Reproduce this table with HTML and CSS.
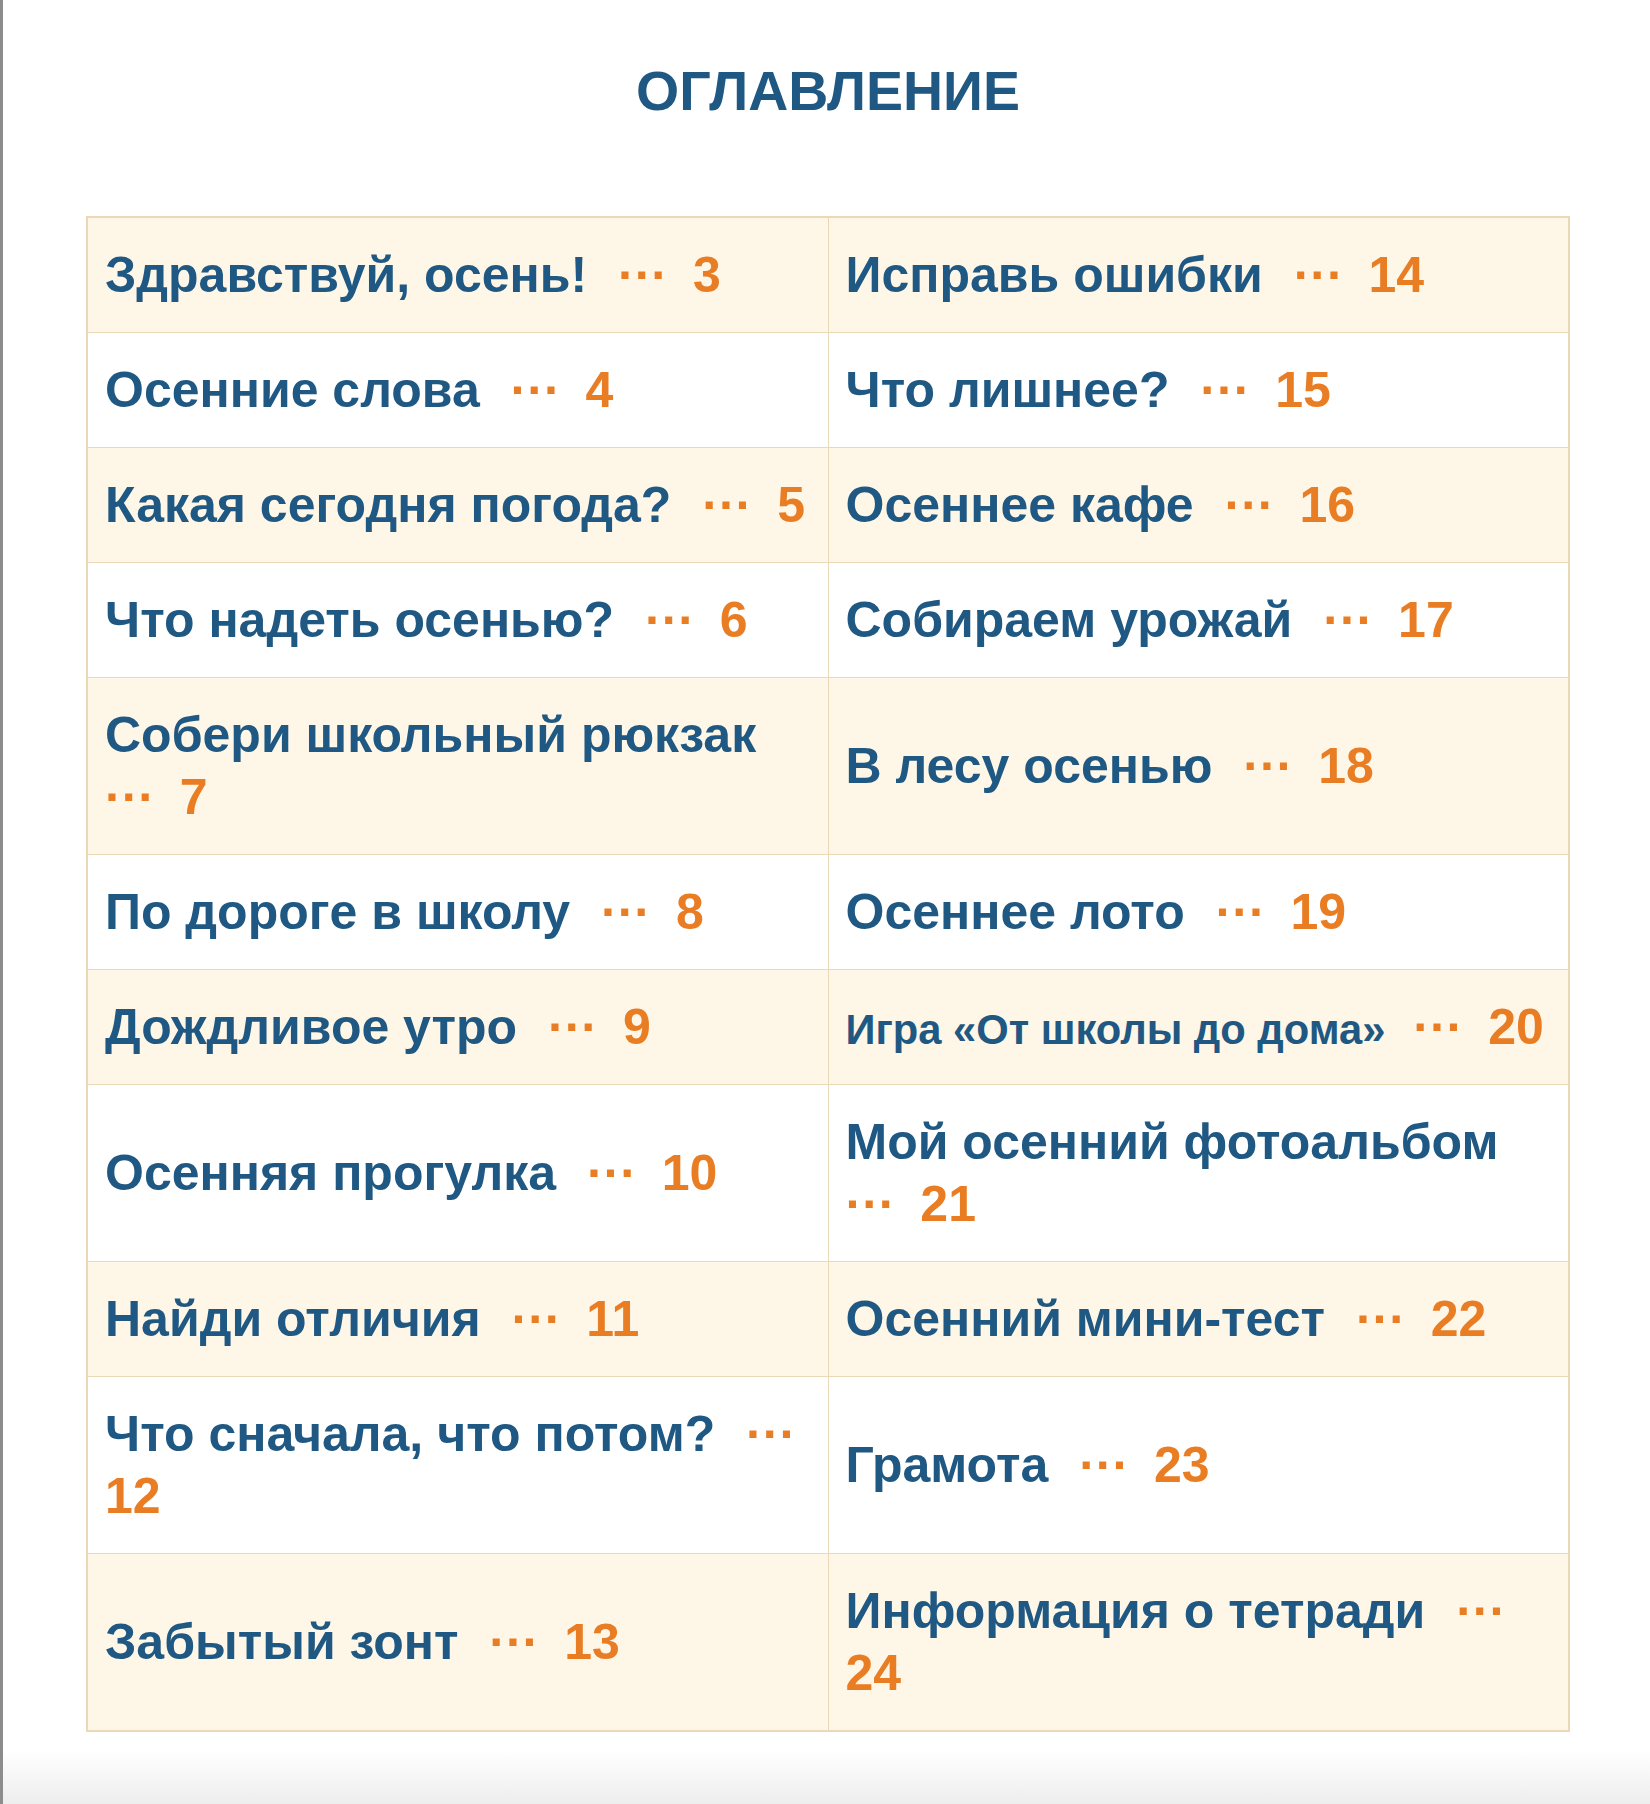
FILE: index.html
```html
<!DOCTYPE html>
<html lang="ru">
<head>
<meta charset="utf-8">
<title>Оглавление</title>
<link rel="stylesheet" href="styles.css">
</head>
<body>
<div class="page">
  <h1 class="title">ОГЛАВЛЕНИЕ</h1>
  <table class="toc">
    <tr class="odd">
      <td><span class="t">Здравствуй, осень!</span> <span class="dots">···</span> <span class="pg">3</span></td>
      <td><span class="t">Исправь ошибки</span> <span class="dots">···</span> <span class="pg">14</span></td>
    </tr>
    <tr>
      <td><span class="t">Осенние слова</span> <span class="dots">···</span> <span class="pg">4</span></td>
      <td><span class="t">Что лишнее?</span> <span class="dots">···</span> <span class="pg">15</span></td>
    </tr>
    <tr class="odd">
      <td><span class="t">Какая сегодня погода?</span> <span class="dots">···</span> <span class="pg">5</span></td>
      <td><span class="t">Осеннее кафе</span> <span class="dots">···</span> <span class="pg">16</span></td>
    </tr>
    <tr>
      <td><span class="t">Что надеть осенью?</span> <span class="dots">···</span> <span class="pg">6</span></td>
      <td><span class="t">Собираем урожай</span> <span class="dots">···</span> <span class="pg">17</span></td>
    </tr>
    <tr class="odd">
      <td><span class="t">Собери школьный рюкзак</span> <span class="dots">···</span> <span class="pg">7</span></td>
      <td><span class="t">В лесу осенью</span> <span class="dots">···</span> <span class="pg">18</span></td>
    </tr>
    <tr>
      <td><span class="t">По дороге в школу</span> <span class="dots">···</span> <span class="pg">8</span></td>
      <td><span class="t">Осеннее лото</span> <span class="dots">···</span> <span class="pg">19</span></td>
    </tr>
    <tr class="odd">
      <td><span class="t">Дождливое утро</span> <span class="dots">···</span> <span class="pg">9</span></td>
      <td><span class="t small">Игра «От школы до дома»</span> <span class="dots">···</span> <span class="pg">20</span></td>
    </tr>
    <tr>
      <td><span class="t">Осенняя прогулка</span> <span class="dots">···</span> <span class="pg">10</span></td>
      <td><span class="t">Мой осенний фотоальбом</span> <span class="dots">···</span> <span class="pg">21</span></td>
    </tr>
    <tr class="odd">
      <td><span class="t">Найди отличия</span> <span class="dots">···</span> <span class="pg">11</span></td>
      <td><span class="t">Осенний мини-тест</span> <span class="dots">···</span> <span class="pg">22</span></td>
    </tr>
    <tr>
      <td><span class="t">Что сначала, что потом?</span> <span class="dots">···</span> <span class="pg">12</span></td>
      <td><span class="t">Грамота</span> <span class="dots">···</span> <span class="pg">23</span></td>
    </tr>
    <tr class="odd">
      <td><span class="t">Забытый зонт</span> <span class="dots">···</span> <span class="pg">13</span></td>
      <td><span class="t">Информация о тетради</span> <span class="dots">···</span> <span class="pg">24</span></td>
    </tr>
  </table>
</div>
</body>
</html>
```

FILE: styles.css
```css
html, body {
  margin: 0;
  padding: 0;
  background: #ffffff;
}

body {
  font-family: "Liberation Sans", Arial, sans-serif;
}

.page {
  box-sizing: border-box;
  min-height: 1804px;
  border-left: 3px solid #8c8c8c;
  padding: 60px 80px 0 83px;
  background: linear-gradient(to bottom, #ffffff 0, #ffffff 1750px, #ededed 1804px);
}

.title {
  margin: 0 0 94px;
  text-align: center;
  font-size: 55.5px;
  line-height: 62px;
  font-weight: 700;
  color: #1f5882;
}

.toc {
  width: 1484px;
  border-collapse: collapse;
  table-layout: fixed;
  border: 2px solid #ead8b6;
}

.toc td {
  width: 50%;
  border: 1px solid #ead8b6;
  padding: 26px 14px 26px 17px;
  vertical-align: middle;
  font-size: 50px;
  line-height: 62px;
  font-weight: 700;
  color: #1f5882;
}

.toc tr.odd td {
  background: #fef6e7;
}

.t {
  margin-right: 17px;
}

.t.small {
  font-size: 41.7px;
  line-height: 40px;
  margin-right: 14px;
}

.dots {
  color: #e97d24;
  letter-spacing: 0;
  margin-right: 11px;
}

.pg {
  color: #e97d24;
}
```
